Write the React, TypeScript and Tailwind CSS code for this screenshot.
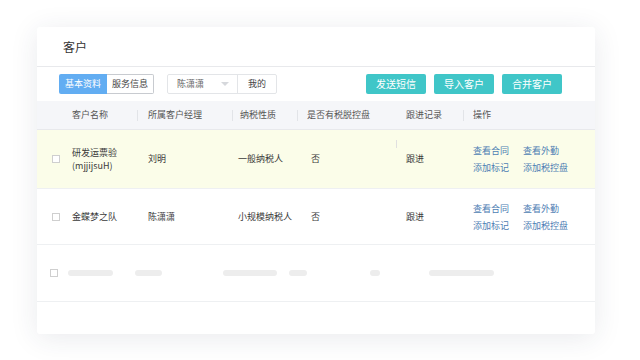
const font = { fontFamily: '"Noto Sans CJK SC", "Noto Sans", sans-serif' }

const rows = [
  { name: ['研发运票验', '(mjjijsuH)'], manager: '刘明', tax: '一般纳税人', hasPlate: '否', follow: '跟进', highlight: true },
  { name: ['金蝶梦之队'], manager: '陈潇潇', tax: '小规模纳税人', hasPlate: '否', follow: '跟进', highlight: false },
]

function Checkbox() {
  return <div className="w-[8px] h-[8px] border border-[#cfcfcf] bg-white" />
}

function Sep() {
  return <div className="w-px h-[11px] bg-[#e2e4e8]" />
}

function Bar({ w }: { w: string }) {
  return <div className={`h-[6px] rounded-full bg-[#ededed] ${w}`} />
}

export default function App() {
  return (
    <div className="w-[640px] h-[360px] bg-white pl-[37px] pt-[27px]" style={font}>
      <div className="w-[558px] h-[307px] bg-white rounded-[3px] shadow-[0_4px_28px_rgba(40,50,80,0.10)] flex flex-col overflow-hidden">
        {/* title */}
        <div className="h-[40px] flex items-center pl-[26px] text-[12px] text-[#333] border-b border-[#e8e9ec]">
          客户
        </div>

        {/* toolbar */}
        <div className="h-[34px] flex items-center pl-[22px] pr-[33px]">
          <div className="flex h-[20px] text-[9px]">
            <div className="w-[48px] flex items-center justify-center bg-[#62adf2] text-white rounded-l-[2px]">基本资料</div>
            <div className="w-[47px] flex items-center justify-center border border-l-0 border-[#c8cbd0] text-[#444] rounded-r-[2px]">服务信息</div>
          </div>
          <div className="flex h-[20px] text-[9px] ml-[13px] border border-[#e3e5e8] rounded-[2px]">
            <div className="w-[70px] flex items-center justify-between pl-[9px] pr-[8px] text-[#666] border-r border-[#e3e5e8]">
              <span>陈潇潇</span>
              <span className="w-0 h-0 border-l-[4px] border-r-[4px] border-t-[4px] border-l-transparent border-r-transparent border-t-[#d6d8dc]" />
            </div>
            <div className="w-[38px] flex items-center justify-center text-[#444]">我的</div>
          </div>
          <div className="ml-auto flex gap-[8px] -mt-[1px]">
            {['发送短信', '导入客户', '合并客户'].map((t) => (
              <div key={t} className="w-[60px] h-[20px] flex items-center justify-center rounded-[2px] bg-[#40c6c8] text-white text-[10px]">
                {t}
              </div>
            ))}
          </div>
        </div>

        {/* header */}
        <div className="h-[29px] flex items-center bg-[#f5f6f9] border-b border-[#e8e9ec] text-[9px] text-[#555]">
          <div className="w-[35px]" />
          <div className="w-[65px]">客户名称</div>
          <div className="w-[95px] flex items-center"><Sep /><span className="pl-[10px]">所属客户经理</span></div>
          <div className="w-[65px] flex items-center"><Sep /><span className="pl-[7px]">纳税性质</span></div>
          <div className="w-[99px] flex items-center"><Sep /><span className="pl-[9px]">是否有税脱控盘</span></div>
          <div className="w-[67px] pl-[10px]">跟进记录</div>
          <div className="flex-1 flex items-center"><Sep /><span className="pl-[9px]">操作</span></div>
        </div>

        {/* rows */}
        {rows.map((r, i) => (
          <div
            key={i}
            className={`grid grid-cols-[35px_76px_90px_73px_95px_67px_1fr] items-center text-[9px] text-[#3a3a3a] border-b border-[#eef0f2] ${
              r.highlight ? 'h-[59px] bg-[#fbfde9]' : 'h-[56px] bg-white'
            }`}
          >
            <div className="pl-[15px]"><Checkbox /></div>
            <div className="leading-[13px]">
              {r.name.map((n) => (
                <div key={n}>{n}</div>
              ))}
            </div>
            <div>{r.manager}</div>
            <div>{r.tax}</div>
            <div className="flex items-center justify-between pr-[9px] self-stretch">
              <span>{r.hasPlate}</span>
              {r.highlight && <div className="w-px h-[8px] bg-[#e0e0e0] self-start mt-[10px]" />}
            </div>
            <div>{r.follow}</div>
            <div className="grid grid-cols-[50px_60px] gap-y-[4px] text-[#4d7db3] leading-[13px]">
              <span>查看合同</span>
              <span>查看外勤</span>
              <span>添加标记</span>
              <span>添加税控盘</span>
            </div>
          </div>
        ))}

        {/* skeleton row */}
        <div className="h-[57px] flex items-center border-b border-[#eef0f2]">
          <div className="w-[13px]" />
          <Checkbox />
          <div className="w-[10px]" />
          <Bar w="w-[45px]" />
          <div className="w-[22px]" />
          <Bar w="w-[27px]" />
          <div className="w-[61px]" />
          <Bar w="w-[54px]" />
          <div className="w-[12px]" />
          <Bar w="w-[18px]" />
          <div className="w-[63px]" />
          <Bar w="w-[10px]" />
          <div className="w-[49px]" />
          <Bar w="w-[65px]" />
        </div>
      </div>
    </div>
  )
}
